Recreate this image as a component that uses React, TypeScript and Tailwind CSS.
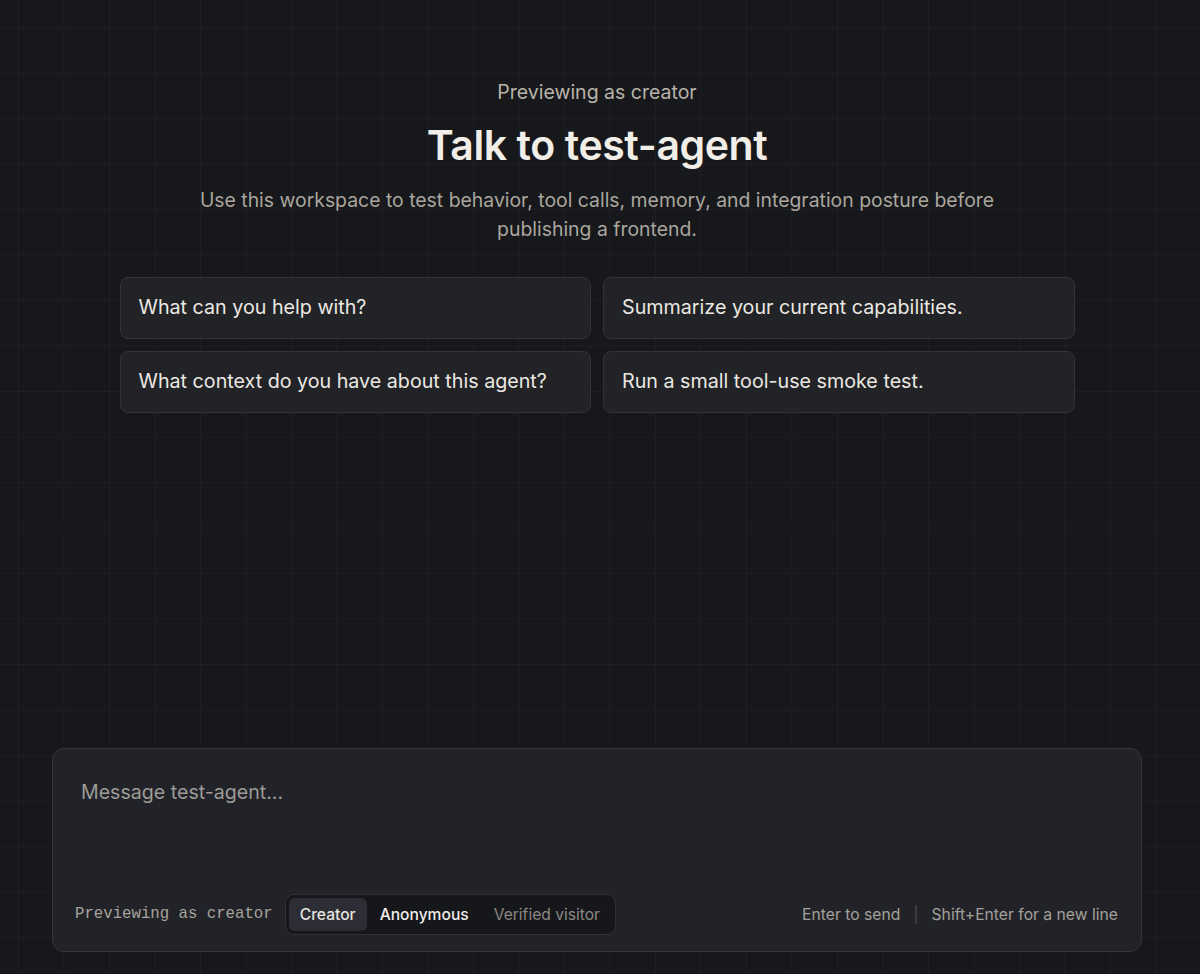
import React from 'react'

const prompts = [
  'What can you help with?',
  'Summarize your current capabilities.',
  'What context do you have about this agent?',
  'Run a small tool-use smoke test.',
]

const modes = ['Creator', 'Anonymous', 'Verified visitor']

const App = () => {
  const active = 'Creator'

  return (
    <div
      className="min-h-[974px] pr-[6px] flex flex-col bg-[#17181c] bg-[linear-gradient(to_right,#1e1f24_1px,transparent_1px),linear-gradient(to_bottom,#1e1f24_1px,transparent_1px)] bg-[size:45.5px_45.5px] bg-[position:18px_27px] font-['Inter','Noto_Sans',sans-serif]"
    >
      <div className="flex flex-col items-center pt-[78px]">
        <p className="text-[19.5px] leading-[28px] text-[#b8b3a8]">Previewing as creator</p>
        <h1 className="mt-[15px] text-[41px] leading-[48px] font-semibold tracking-[-0.01em] text-[#f1eee7]">
          Talk to test-agent
        </h1>
        <p className="mt-[17px] max-w-[820px] text-center text-[19.4px] leading-[28.5px] text-[#aaa69d]">
          Use this workspace to test behavior, tool calls, memory, and integration posture before publishing a frontend.
        </p>

        <div className="mt-[34px] grid grid-cols-2 gap-x-[12px] gap-y-[12px] w-[955px]">
          {prompts.map((p) => (
            <button
              key={p}
              className="h-[62px] rounded-[8px] border border-[#323338] bg-[#222327] px-[18px] text-left text-[19.7px] text-[#ebe8e2]"
            >
              {p}
            </button>
          ))}
        </div>
      </div>

      <div className="flex-1" />

      <div className="ml-[52px] mb-[22px] w-[1090px] h-[204px] rounded-[12px] border border-[#35363c] bg-[#222328] flex flex-col">
        <div className="flex-1 px-[28px] pt-[31px] text-[19.6px] leading-[24px] text-[#9c9b97]">
          Message test-agent...
        </div>
        <div className="flex items-center justify-between pl-[22px] pr-[23px] pb-[16px]">
          <div className="flex items-center gap-[12px]">
            <span className="font-['Liberation_Mono',monospace] text-[15.7px] text-[#a7a49d]">
              Previewing as creator
            </span>
            <div className="flex items-center gap-[2px] rounded-[9px] border border-[#303137] bg-[#16171b] p-[3px]">
              {modes.map((m) => (
                <span
                  key={m}
                  className={
                    m === active
                      ? 'rounded-[6px] bg-[#2d2e35] px-[11px] h-[33px] flex items-center text-[15.6px] font-medium text-[#e6e4df]'
                      : m === 'Anonymous'
                        ? 'px-[11px] h-[33px] flex items-center text-[15.6px] font-medium text-[#f0eee9]'
                        : 'px-[12px] h-[33px] flex items-center text-[15.6px] text-[#8a8984]'
                  }
                >
                  {m}
                </span>
              ))}
            </div>
          </div>
          <div className="flex items-center gap-[13px] text-[15.7px] text-[#a3a19b]">
            <span>Enter to send</span>
            <span className="text-[#4a4a4f]">|</span>
            <span>Shift+Enter for a new line</span>
          </div>
        </div>
      </div>
    </div>
  )
}

export default App
